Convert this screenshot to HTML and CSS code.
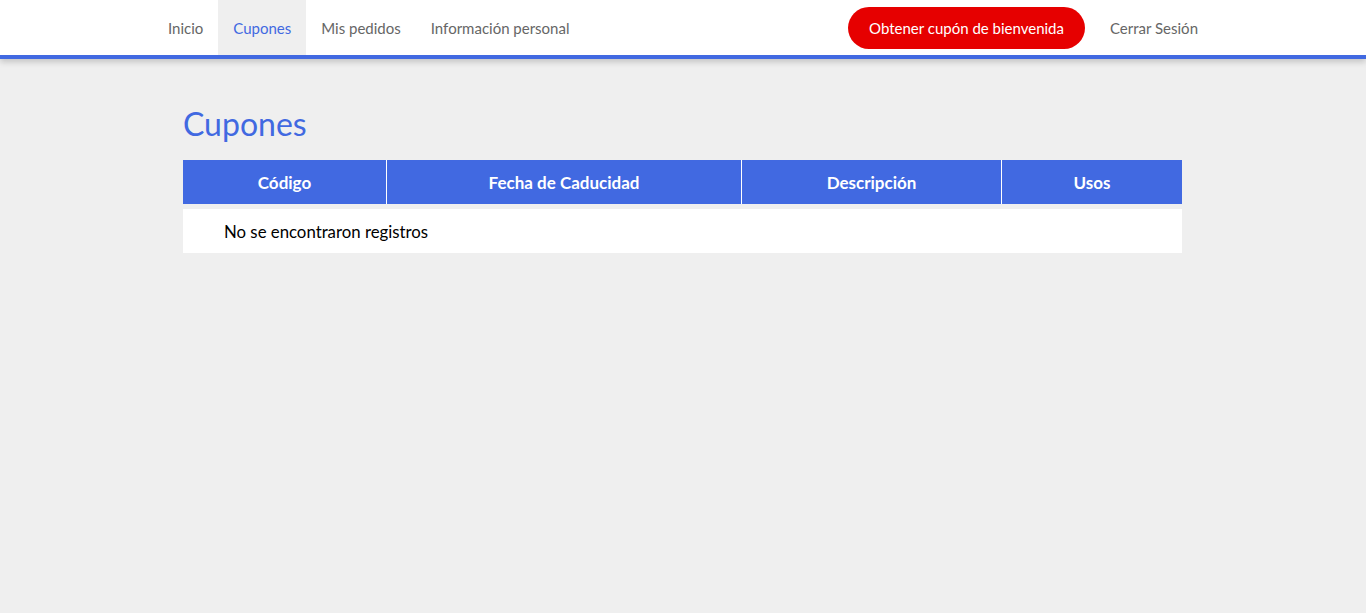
FILE: index.html
```html
<!DOCTYPE html>
<html lang="es">
<head>
<meta charset="utf-8">
<title>Cupones</title>
<link rel="stylesheet" href="styles.css">
</head>
<body>
<header class="topbar">
  <nav class="nav">
    <ul class="nav-left">
      <li><a class="nav-link" href="#">Inicio</a></li>
      <li><a class="nav-link active" href="#">Cupones</a></li>
      <li><a class="nav-link" href="#">Mis pedidos</a></li>
      <li><a class="nav-link" href="#">Información personal</a></li>
    </ul>
    <div class="nav-right">
      <a class="btn-welcome" href="#">Obtener cupón de bienvenida</a>
      <a class="nav-link" href="#">Cerrar Sesión</a>
    </div>
  </nav>
</header>
<main class="content">
  <h1 class="title">Cupones</h1>
  <div class="table">
    <div class="thead">
      <div class="th c1">Código</div>
      <div class="th c2">Fecha de Caducidad</div>
      <div class="th c3">Descripción</div>
      <div class="th c4">Usos</div>
    </div>
    <div class="empty">No se encontraron registros</div>
  </div>
</main>
</body>
</html>
```

FILE: styles.css
```css
* { box-sizing: border-box; }
html, body { margin: 0; padding: 0; }
body {
  background: #efefef;
  font-family: "Source Sans Pro", Lato, "Liberation Sans", sans-serif;
  color: #000;
  min-height: 613px;
}
.topbar {
  background: #fff;
  border-bottom: 4px solid #4169e1;
  box-shadow: 0 3px 6px rgba(0,0,0,0.18);
}
.nav {
  width: 1060px;
  margin: 0 auto;
  height: 55px;
  display: flex;
  justify-content: space-between;
  align-items: stretch;
}
.nav-left {
  list-style: none;
  margin: 0;
  padding: 0;
  display: flex;
}
.nav-left li { display: flex; }
.nav-link {
  display: flex;
  align-items: center;
  padding: 0 15px;
  font-size: 15px;
  color: #666;
  text-decoration: none;
}
.nav-link.active {
  background: #efefef;
  color: #4169e1;
}
.nav-right {
  display: flex;
  align-items: center;
  gap: 10px;
}
.btn-welcome {
  background: #e60000;
  color: #fff;
  text-decoration: none;
  font-size: 15px;
  height: 42px;
  padding: 0 21px;
  border-radius: 21px;
  display: flex;
  align-items: center;
}
.nav-right .nav-link { align-self: stretch; }
.content {
  width: 1000px;
  margin: 0 auto;
  padding-top: 44px;
}
.title {
  margin: 0 0 15px;
  font-size: 32px;
  font-weight: 400;
  color: #4169e1;
  line-height: 42px;
}
.table { width: 999px; }
.thead {
  display: grid;
  grid-template-columns: 203px 355px 260px 1fr;
  background: #4169e1;
  height: 44px;
}
.th {
  color: #fff;
  font-weight: 700;
  font-size: 17px;
  display: flex;
  align-items: center;
  justify-content: center;
}
.th + .th { border-left: 1px solid #fff; }
.empty {
  margin-top: 5px;
  background: #fff;
  height: 44px;
  display: flex;
  align-items: center;
  padding-left: 41px;
  font-size: 16.8px;
}
```
